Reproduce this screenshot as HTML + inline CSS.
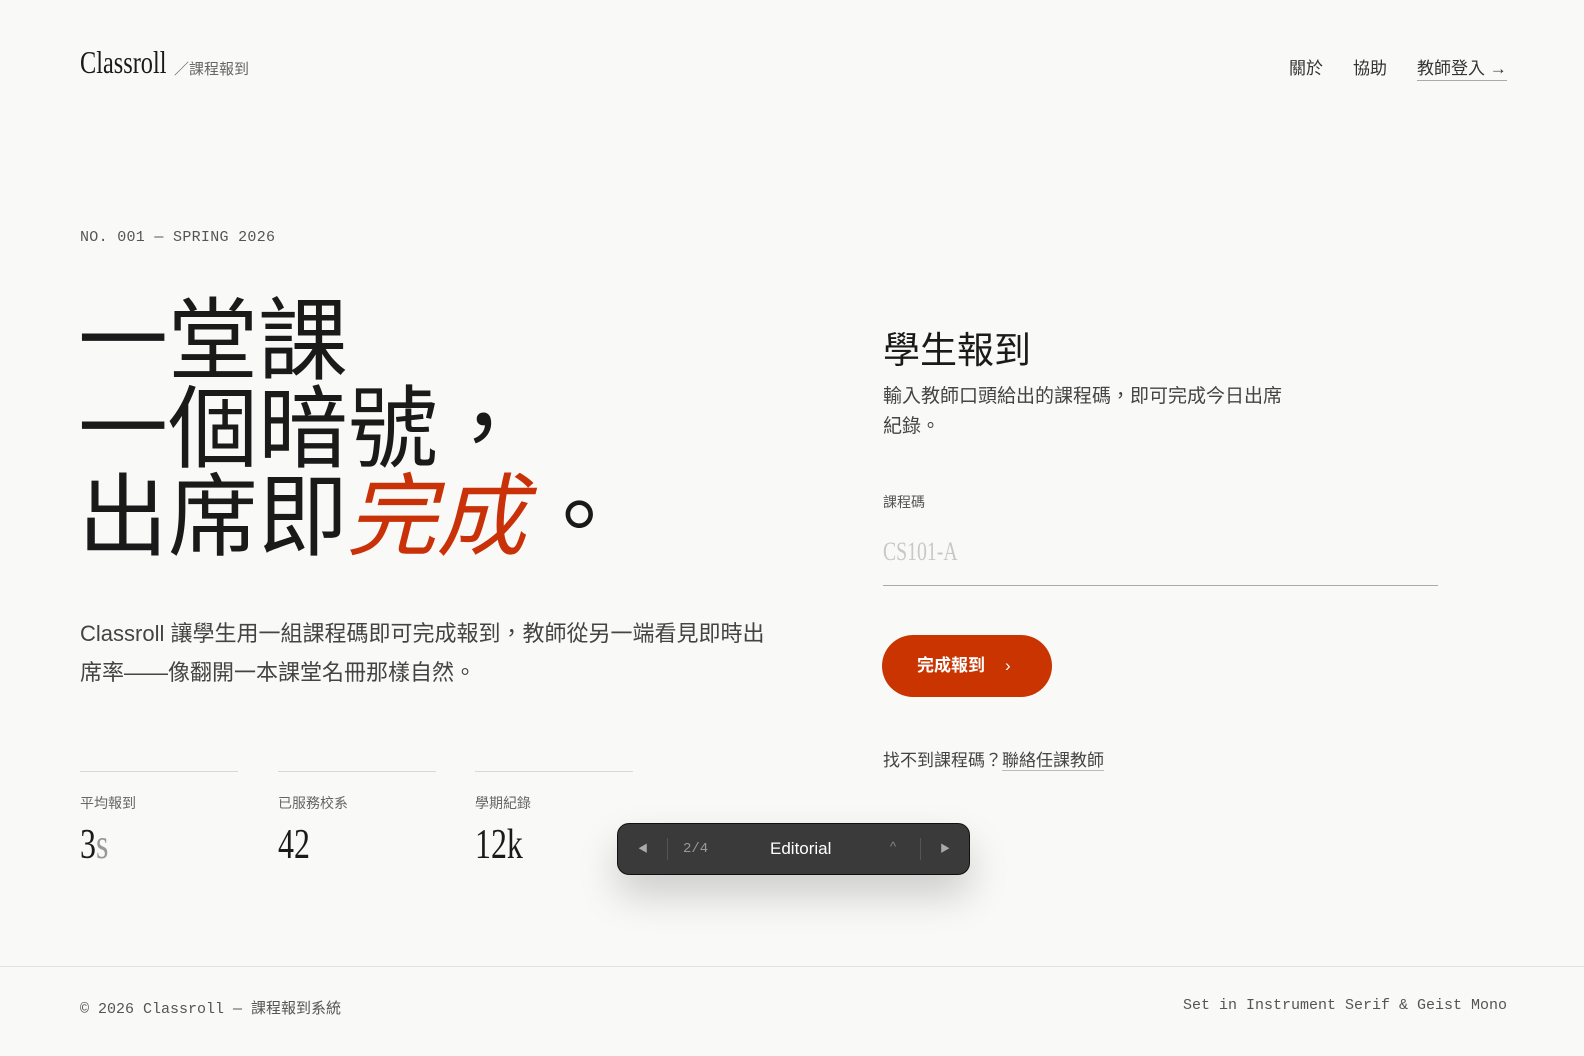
<!DOCTYPE html>
<html><head><meta charset="utf-8"><style>
*{margin:0;padding:0;box-sizing:border-box}
body{width:1584px;height:1056px;background:#f9f9f7;font-family:"Liberation Sans","Noto Sans CJK TC",sans-serif;color:#222;position:relative;overflow:hidden}
.a{position:absolute;white-space:nowrap}
.serif{font-family:"Liberation Serif","Noto Serif CJK SC",serif;display:inline-block;transform:scaleX(.76);transform-origin:left}
.mono{font-family:"Liberation Mono","Noto Sans CJK TC",monospace}
</style></head><body>
<div class="a" style="left:80px;top:44px;font-size:32px;color:#1a1a1a"><span class="serif">Classroll</span></div>
<div class="a" style="left:174px;top:58px;font-size:15px;color:#666">／課程報到</div>
<div class="a" style="left:1289px;top:54px;font-size:17px;color:#333">關於</div>
<div class="a" style="left:1353px;top:54px;font-size:17px;color:#333">協助</div>
<div class="a" style="left:1417px;top:54px;font-size:17px;color:#333;border-bottom:1px solid #aaa;padding-bottom:1px">教師登入 →</div>

<div class="a mono" style="left:80px;top:229px;font-size:15px;color:#555;letter-spacing:.3px">NO. 001 — SPRING 2026</div>

<div class="a" style="left:78px;top:298px;font-size:90px;line-height:88px;color:#1a1a1a;font-weight:400">一堂課<br>一個暗號，<br>出席即<span style="color:#c93208;display:inline-block;transform:skewX(-14deg);margin-left:6px">完成</span>。</div>

<div class="a" style="left:80px;top:614px;font-size:22px;line-height:39px;color:#444">Classroll 讓學生用一組課程碼即可完成報到，教師從另一端看見即時出<br>席率——像翻開一本課堂名冊那樣自然。</div>

<div class="a" style="left:80px;top:771px;width:158px;border-top:1px solid #d8d8d6"></div>
<div class="a" style="left:278px;top:771px;width:158px;border-top:1px solid #d8d8d6"></div>
<div class="a" style="left:475px;top:771px;width:158px;border-top:1px solid #d8d8d6"></div>
<div class="a" style="left:80px;top:793px;font-size:14px;color:#666">平均報到</div>
<div class="a" style="left:278px;top:793px;font-size:14px;color:#666">已服務校系</div>
<div class="a" style="left:475px;top:793px;font-size:14px;color:#666">學期紀錄</div>
<div class="a" style="left:80px;top:820px;font-size:42px;color:#1a1a1a"><span class="serif">3<span style="color:#999">s</span></span></div>
<div class="a" style="left:278px;top:820px;font-size:42px;color:#1a1a1a"><span class="serif">42</span></div>
<div class="a" style="left:475px;top:820px;font-size:42px;color:#1a1a1a"><span class="serif">12k</span></div>

<div class="a" style="left:883px;top:320px;font-size:37px;color:#1a1a1a">學生報到</div>
<div class="a" style="left:883px;top:382px;font-size:19px;line-height:30px;color:#444">輸入教師口頭給出的課程碼，即可完成今日出席<br>紀錄。</div>
<div class="a" style="left:883px;top:492px;font-size:14px;color:#555">課程碼</div>
<div class="a" style="left:883px;top:536px;font-size:26px;color:#c8c8c6"><span class="serif">CS101-A</span></div>
<div class="a" style="left:883px;top:585px;width:555px;border-top:1.5px solid #aaa"></div>
<div class="a" style="left:882px;top:635px;width:170px;height:62px;border-radius:31px;background:#c93400;color:#fff;font-size:17px;font-weight:700;line-height:62px;padding-left:35px">完成報到<span style="margin-left:20px;font-weight:400">›</span></div>
<div class="a" style="left:883px;top:746px;font-size:17px;color:#444">找不到課程碼？<span style="border-bottom:1px solid #bbb">聯絡任課教師</span></div>

<div class="a" style="left:617px;top:823px;width:353px;height:52px;border-radius:12px;background:#3a3a3a;border:1px solid #111;box-shadow:0 20px 40px rgba(0,0,0,.18)">
<div class="a" style="left:20px;top:16px;font-size:10px;color:#aaa">◀</div>
<div class="a" style="left:49px;top:14px;height:22px;border-left:1px solid #555"></div>
<div class="a mono" style="left:65px;top:17px;font-size:14px;color:#999">2/4</div>
<div class="a" style="left:152px;top:15px;font-size:17px;color:#fff">Editorial</div>
<div class="a" style="left:272px;top:15px;font-size:13px;color:#888">^</div>
<div class="a" style="left:302px;top:14px;height:22px;border-left:1px solid #555"></div>
<div class="a" style="left:322px;top:16px;font-size:10px;color:#aaa">▶</div>
</div>

<div class="a" style="left:0;top:966px;width:1584px;border-top:1px solid #e2e2e0"></div>
<div class="a mono" style="left:80px;top:997px;font-size:15px;color:#555">© 2026 Classroll — 課程報到系統</div>
<div class="a mono" style="right:77px;top:997px;font-size:15px;color:#555">Set in Instrument Serif &amp; Geist Mono</div>
</body></html>
